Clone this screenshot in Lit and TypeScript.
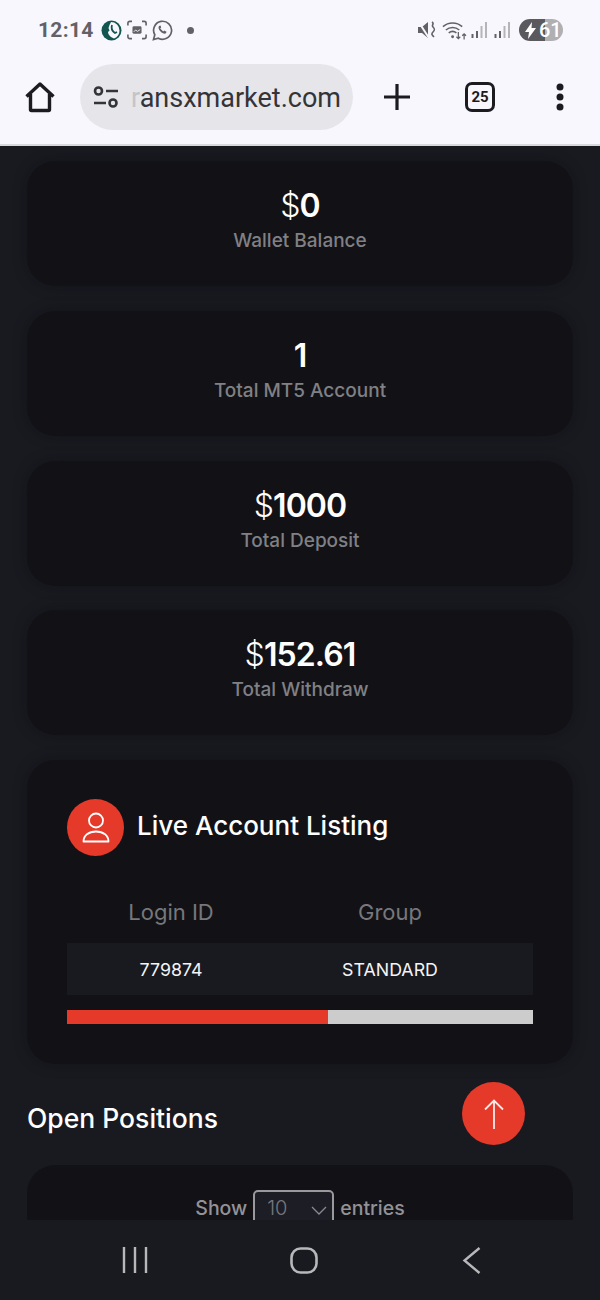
import { LitElement, html, css, svg } from "lit";
import { customElement } from "lit/decorators.js";

const stats = [
  { cur: "$", val: "0", label: "Wallet Balance" },
  { cur: "", val: "1", label: "Total MT5 Account" },
  { cur: "$", val: "1000", label: "Total Deposit" },
  { cur: "$", val: "152.61", label: "Total Withdraw" },
];

const bars = () => svg`<rect x="0.500" y="13" width="2" height="4" fill="#626266"/><rect x="5" y="10" width="2" height="7" fill="#626266"/><rect x="9.500" y="5" width="2" height="12" fill="#b5b5b8"/><rect x="14" y="1" width="2" height="16" fill="#b5b5b8"/>`;

@customElement("app-root")
export class AppRoot extends LitElement {
  static styles = css`
    :host { display: block; width: 600px; height: 1300px; overflow: hidden; position: relative; background: #191a20; font-family: "Inter", "Liberation Sans", sans-serif; }
    * { box-sizing: border-box; }
    .shell { height: 1300px; display: flex; flex-direction: column; }
    .chrome { height: 146px; flex: none; background: #f9f7fe; border-bottom: 2px solid #d9d9dc; display: flex; flex-direction: column; }
    .status { height: 64px; padding: 0 37px 4px 38px; display: flex; align-items: center; color: #626266; }
    .time { font: 700 21px "Roboto", sans-serif; letter-spacing: 0.3px; margin-right: 11px; width: 52px; }
    .sicons { display: flex; align-items: center; gap: 5px; }
    .dot { width: 7px; height: 7px; border-radius: 50%; background: #626266; margin-left: 14px; }
    .spacer { flex: 1; }
    .rstat { display: flex; align-items: center; }
    .wifi { margin-left: 6px; }
    .b1 { margin-left: 4px; }
    .b2 { margin-left: 6px; }
    .batt { width: 44px; height: 22px; border-radius: 11px; background: linear-gradient(90deg, #5a5a5e 0 59%, #b0b0b3 59% 100%); color: #fff; font: 500 20px "Roboto", sans-serif; display: flex; align-items: center; padding-left: 6px; gap: 3px; margin-left: 8px; }
    .toolbar { height: 66px; display: flex; align-items: center; padding-left: 24px; }
    .pill { width: 273px; height: 66px; margin-left: 24px; border-radius: 33px; background: #e6e6ea; display: flex; align-items: center; padding-left: 13px; }
    .url { font: 400 27px "Roboto", sans-serif; color: #333438; margin-left: 12px; white-space: nowrap; padding-top: 1px; }
    .url i { font-style: normal; color: #c4c4c8; }
    .tbtn { display: flex; align-items: center; justify-content: center; }
    .plus { margin-left: 30px; }
    .tabs { margin-left: 54px; width: 30px; height: 30px; border: 3.5px solid #1c1c20; border-radius: 7px; font: 700 15px "Roboto", sans-serif; color: #1c1c20; }
    .more { margin-left: 60px; }
    main { flex: 1; min-height: 0; overflow: hidden; padding: 15px 27px 0; display: flex; flex-direction: column; }
    .card { background: #121216; border-radius: 28px; box-shadow: 0 0 14px rgba(10, 10, 14, 0.35); }
    .stat { height: 125px; margin-bottom: 24.75px; flex: none; display: flex; flex-direction: column; align-items: center; padding-top: 22px; }
    .value { font-size: 32px; line-height: 45px; height: 45px; font-weight: 600; color: #fff; letter-spacing: -0.9px; }
    .value span { font-weight: 300; }
    .label { font-size: 19px; line-height: 26px; color: #808085; font-weight: 500; }
    .live { height: 304px; flex: none; padding: 39px 40px 0; }
    .lhead { display: flex; align-items: center; gap: 13px; }
    .avatar { width: 57px; height: 57px; border-radius: 50%; background: #e5392a; display: flex; align-items: center; justify-content: center; }
    .ltitle { font-size: 26px; font-weight: 500; color: #fff; padding-bottom: 5px; }
    .thead, .trow { display: grid; grid-template-columns: 208px 230px 1fr; text-align: center; }
    .thead { margin-top: 35px; height: 52px; font-size: 22px; color: #77777c; font-weight: 400; align-items: start; line-height: 43px; }
    .trow { height: 52px; background: #191a20; color: #f4f4f6; font-size: 17.8px; align-items: center; }
    .bar { height: 14px; margin-top: 15px; background: #cccccc; }
    .bar div { height: 100%; background: #e5392a; }
    h2 { margin: 36px 0 0; font-size: 26.5px; line-height: 36px; font-weight: 500; color: #fff; height: 65px; flex: none; }
    .table { flex: 1; min-height: 50px; border-radius: 28px 28px 0 0; background: #121216; display: flex; justify-content: center; align-items: flex-start; gap: 6px; padding-top: 25px; color: #929297; font-size: 19.5px; font-weight: 500; line-height: 24px; }
    .table span { margin-top: 6px; }
    .select { width: 81px; height: 60px; border: 2px solid #9a9a9e; border-radius: 5px; background: #1d1e25; color: #77777c; padding: 4px 0 0 12px; font-size: 20px; font-weight: 300; position: relative; }
    .select svg { position: absolute; right: 4px; top: 14px; }
    nav { height: 80px; flex: none; background: #191a20; position: relative; }
    .navi { position: absolute; top: 27px; }
    .n1 { left: 122px; } .n2 { left: 290px; } .n3 { left: 462px; }
    .fab { position: absolute; left: 462px; top: 1082px; width: 63px; height: 63px; border-radius: 50%; background: #e5392a; display: flex; align-items: center; justify-content: center; }
  `;

  render() {
    return html`<div class="shell">
      <header class="chrome">
        <div class="status">
          <span class="time">12:14</span>
          <div class="sicons">
            <svg width="21" height="21" viewBox="0 0 21 21"><circle cx="10.500" cy="10.500" r="10" fill="#12564f"/><path d="M10 2a8.500 8.500 0 0 1 8.500 8.500A8.500 8.500 0 0 1 13 18.500l-3-1.500c-2-1.500-3-3.500-3-5l1.500-1.500L7.500 8l1-3z" fill="#f9f7fe"/><path d="M11 5c-1 3 0 6 3 8l2-1" stroke="#12564f" stroke-width="1.800" fill="none"/></svg>
            <svg width="20" height="20" viewBox="0 0 22 22" fill="none" stroke="#626266" stroke-width="1.800"><path d="M1 6V3.500a2 2 0 0 1 2-2h2.500M16.500 1.500H19a2 2 0 0 1 2 2V6M21 16v2.500a2 2 0 0 1-2 2h-2.500M5.500 20.500H3a2 2 0 0 1-2-2V16"/><rect x="6" y="7" width="10" height="8" rx="1.500" fill="#626266" stroke="none"/><path d="M7.500 13l2-2 2 1.500 3-2" stroke="#f9f7fe" stroke-width="1"/></svg>
            <svg width="21" height="21" viewBox="0 0 21 21" fill="none" stroke="#626266" stroke-width="1.700"><path d="M1.500 19.500l1.300-4.700a9 9 0 1 1 3.500 3.400z"/><path d="M7 6c-1 1.500-.5 3.500 1.500 5.500s4 2.700 5.500 1.700l.5-1.500-2.300-1.200-1 1-3-3 1-1L8.500 5.500z" fill="#626266" stroke="none"/></svg>
          </div>
          <span class="dot"></span>
          <span class="spacer"></span>
          <div class="rstat">
            <svg width="18" height="20" viewBox="0 0 18 20"><path d="M0 7h4l6-5v16l-6-5H0z" fill="#626266"/><path d="M0 1l11 17" stroke="#f9f7fe" stroke-width="2"/><path d="M14 2c3 2-1 3 1 5s2 3 0 5-1 3 1 5" stroke="#626266" stroke-width="1.600" fill="none"/></svg>
            <svg class="wifi" width="25" height="22" viewBox="0 0 26 22" fill="none" stroke="#626266" stroke-width="1.600"><path d="M1 7.500a15 15 0 0 1 20 0M4 11a11 11 0 0 1 14 0M7 14a6.500 6.500 0 0 1 8 0"/><circle cx="11" cy="18" r="1.500" fill="#626266" stroke="none"/><path d="M17 13v7M15 18l2 2 2-2M23 21v-6M21 17l2-2 2 2" stroke-width="1.300"/></svg>
            <svg class="b1" width="17" height="18" viewBox="0 0 17 18">${bars()}</svg>
            <svg class="b2" width="17" height="18" viewBox="0 0 17 18">${bars()}</svg>
            <div class="batt"><svg width="11" height="17" viewBox="0 0 11 17"><path d="M7 0L0 10h4l-1 7 8-11H6.500z" fill="#fff"/></svg>61</div>
          </div>
        </div>
        <div class="toolbar">
          <svg width="32" height="32" viewBox="0 0 32 32" fill="none" stroke="#1c1c20" stroke-width="3.400" stroke-linejoin="round"><path d="M2.500 15.500L16 3l13.500 12.500M6.500 13v15.500a1 1 0 0 0 1 1h17a1 1 0 0 0 1-1V13"/></svg>
          <div class="pill">
            <svg width="26" height="22" viewBox="0 0 26 22" fill="none" stroke="#333438" stroke-width="2.600"><circle cx="5.500" cy="5" r="3.500"/><path d="M13 5h12M1 17h12"/><circle cx="20" cy="17" r="3.500"/></svg>
            <span class="url"><i>r</i>ansxmarket.com</span>
          </div>
          <svg class="plus" width="28" height="28" viewBox="0 0 28 28" stroke="#1c1c20" stroke-width="3.200"><path d="M14 1v26M1 14h26"/></svg>
          <div class="tbtn tabs">25</div>
          <svg class="more" width="10" height="28" viewBox="0 0 10 28" fill="#1c1c20"><circle cx="5" cy="4" r="3.500"/><circle cx="5" cy="14" r="3.500"/><circle cx="5" cy="24" r="3.500"/></svg>
        </div>
      </header>
      <main>
        ${stats.map((s) => html`<section class="card stat">
          <div class="value"><span>${s.cur}</span>${s.val}</div>
          <div class="label">${s.label}</div>
        </section>`)}
        <section class="card live">
          <div class="lhead">
            <div class="avatar"><svg width="28" height="32" viewBox="0 0 28 32" fill="none" stroke="#fff" stroke-width="1.800"><circle cx="14" cy="8.500" r="7"/><path d="M1.500 29.500c0-6 5-10 12.500-10s12.500 4 12.500 10z" stroke-linejoin="round"/></svg></div>
            <div class="ltitle">Live Account Listing</div>
          </div>
          <div class="thead"><div>Login ID</div><div>Group</div></div>
          <div class="trow"><div>779874</div><div>STANDARD</div></div>
          <div class="bar"><div style="width:56%"></div></div>
        </section>
        <h2>Open Positions</h2>
        <section class="table">
          <span>Show</span>
          <div class="select">10<svg width="18" height="10" viewBox="0 0 18 10" fill="none" stroke="#8a8a8f" stroke-width="1.300"><path d="M2 1l7 7 7-7"/></svg></div>
          <span>entries</span>
        </section>
      </main>
      <nav>
        <svg class="navi n1" width="27" height="26" viewBox="0 0 27 26" stroke="#b8b8bb" stroke-width="2.400"><path d="M2 0v26M13 0v26M24 0v26"/></svg>
        <svg class="navi n2" width="28" height="27" viewBox="0 0 28 27" fill="none" stroke="#b8b8bb" stroke-width="2.600"><rect x="1.500" y="1.500" width="25" height="24" rx="9"/></svg>
        <svg class="navi n3" width="20" height="27" viewBox="0 0 20 27" fill="none" stroke="#b8b8bb" stroke-width="2.400"><path d="M17.500 1L2.500 13.500l15 12.500"/></svg>
      </nav>
    </div>
    <div class="fab"><svg width="20" height="30" viewBox="0 0 20 30" fill="none" stroke="#ffe9e6" stroke-width="1.800"><path d="M10 30V1.500M1 10.500l9-9 9 9"/></svg></div>`;
  }
}
